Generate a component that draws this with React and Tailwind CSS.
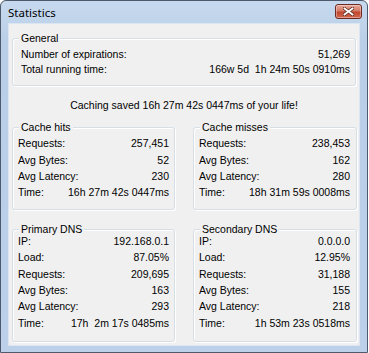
import React from 'react';

const general = [
  ['Number of expirations:', '51,269'],
  ['Total running time:', '166w 5d  1h 24m 50s 0910ms'],
];

const hits = [
  ['Requests:', '257,451'],
  ['Avg Bytes:', '52'],
  ['Avg Latency:', '230'],
  ['Time:', '16h 27m 42s 0447ms'],
];

const misses = [
  ['Requests:', '238,453'],
  ['Avg Bytes:', '162'],
  ['Avg Latency:', '280'],
  ['Time:', '18h 31m 59s 0008ms'],
];

const primary = [
  ['IP:', '192.168.0.1'],
  ['Load:', '87.05%'],
  ['Requests:', '209,695'],
  ['Avg Bytes:', '163'],
  ['Avg Latency:', '293'],
  ['Time:', '17h  2m 17s 0485ms'],
];

const secondary = [
  ['IP:', '0.0.0.0'],
  ['Load:', '12.95%'],
  ['Requests:', '31,188'],
  ['Avg Bytes:', '155'],
  ['Avg Latency:', '218'],
  ['Time:', '1h 53m 23s 0518ms'],
];

function Group({ title, rows, className = '', legendClass = 'ml-[1px]', bodyClass = '', rowClass = 'h-[16.4px]' }) {
  return (
    <fieldset
      className={`border border-[#d5dfe5] rounded-[3px] shadow-[inset_1px_1px_0_#fff,1px_1px_0_#fff] ${className}`}
    >
      <legend className={`px-[2px] leading-[13px] bg-[#f0f0f0] ${legendClass}`}>{title}</legend>
      <div className={bodyClass}>
        {rows.map(([label, value]) => (
          <div key={label} className={`flex items-center justify-between whitespace-pre ${rowClass}`}>
            <span>{label}</span>
            <span>{value}</span>
          </div>
        ))}
      </div>
    </fieldset>
  );
}

function CloseButton() {
  return (
    <div className="-mr-[2px] mt-[-2px] w-[27px] h-[15px] rounded-[3px] border border-[#6d2a22] bg-[linear-gradient(#e9a99a,#d47a66_45%,#c0452e_55%,#d46a52)] flex items-center justify-center shadow-[inset_0_0_0_1px_rgba(255,255,255,0.35)]">
      <svg width="11" height="9" viewBox="0 0 11 9">
        <path
          d="M1.5 1.5 L9.5 7.5 M9.5 1.5 L1.5 7.5"
          stroke="#5a2a20"
          strokeWidth="3.4"
          strokeLinecap="square"
        />
        <path
          d="M1.5 1.5 L9.5 7.5 M9.5 1.5 L1.5 7.5"
          stroke="#fff"
          strokeWidth="1.8"
          strokeLinecap="square"
        />
      </svg>
    </div>
  );
}

export default function App() {
  return (
    <div className="w-[369px] h-[353px] bg-white font-['Liberation_Sans',Arial,sans-serif] text-[10.5px] text-black">
      <div className="w-[368px] h-[353px] rounded-t-[6px] border border-[#4c5a6c] bg-[linear-gradient(#c7d9ee,#b9cfe7_12%,#bcd1e9)] flex flex-col px-[7px] pb-[6px]">
        {/* title bar */}
        <div className="h-[22px] flex items-center justify-between">
          <span className="text-[11.5px] font-['Noto_Sans',sans-serif] leading-none pt-[1px]">Statistics</span>
          <CloseButton />
        </div>

        {/* client area */}
        <div className="flex-1 bg-[#f0f0f0] border border-[#dce6f2] px-[3px] pt-[8px]">
          <Group
            title="General"
            rows={general}
            className="pl-[8px] pr-[5px] pt-[2px] pb-[8px]"
            legendClass="ml-[-2px]"
            rowClass="h-[15px]"
          />

          <div className="text-center mt-[13px] leading-[13px]">
            Caching saved 16h 27m 42s 0447ms of your life!
          </div>

          <div className="grid grid-cols-[163px_164px] gap-x-[18px] mt-[9px]">
            <Group title="Cache hits" rows={hits} className="px-[5px] pt-[2px] pb-[7px]" />
            <Group title="Cache misses" rows={misses} className="pl-[5px] pr-[6px] pt-[2px] pb-[7px]" />
          </div>

          <div className="grid grid-cols-[163px_164px] gap-x-[18px] mt-[13px]">
            <Group title="Primary DNS" rows={primary} className="px-[5px] pb-[9px]" bodyClass="-mt-[2px]" />
            <Group title="Secondary DNS" rows={secondary} className="pl-[5px] pr-[6px] pb-[9px]" bodyClass="-mt-[2px]" />
          </div>
        </div>
      </div>
    </div>
  );
}
